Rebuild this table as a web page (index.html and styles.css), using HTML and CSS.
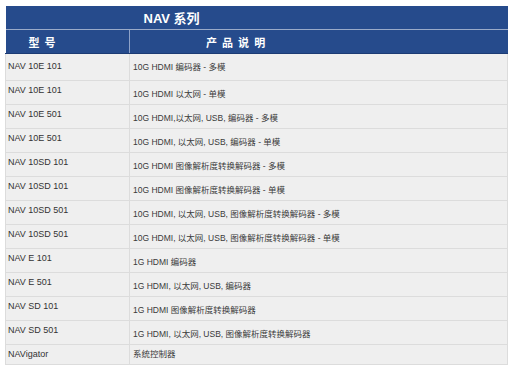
FILE: index.html
```html
<!DOCTYPE html>
<html lang="zh">
<head>
<meta charset="utf-8">
<title>NAV 系列</title>
<link rel="stylesheet" href="styles.css">
</head>
<body>
<table class="spec">
  <colgroup><col class="c1"><col class="c2"></colgroup>
  <thead>
    <tr><th class="title" colspan="2">NAV 系列</th></tr>
    <tr><th class="h1">型 号</th><th class="h2">产 品 说 明</th></tr>
  </thead>
  <tbody>
    <tr class="first"><td class="m">NAV 10E 101</td><td class="d">10G HDMI 编码器 - 多模</td></tr>
    <tr><td class="m">NAV 10E 101</td><td class="d">10G HDMI 以太网 - 单模</td></tr>
    <tr><td class="m">NAV 10E 501</td><td class="d">10G HDMI,以太网, USB, 编码器 - 多模</td></tr>
    <tr><td class="m">NAV 10E 501</td><td class="d">10G HDMI, 以太网, USB, 编码器 - 单模</td></tr>
    <tr><td class="m">NAV 10SD 101</td><td class="d">10G HDMI 图像解析度转换解码器 - 多模</td></tr>
    <tr><td class="m">NAV 10SD 101</td><td class="d">10G HDMI 图像解析度转换解码器 - 单模</td></tr>
    <tr><td class="m">NAV 10SD 501</td><td class="d">10G HDMI, 以太网, USB, 图像解析度转换解码器 - 多模</td></tr>
    <tr><td class="m">NAV 10SD 501</td><td class="d">10G HDMI, 以太网, USB, 图像解析度转换解码器 - 单模</td></tr>
    <tr><td class="m">NAV E 101</td><td class="d">1G HDMI 编码器</td></tr>
    <tr><td class="m">NAV E 501</td><td class="d">1G HDMI, 以太网, USB, 编码器</td></tr>
    <tr><td class="m">NAV SD 101</td><td class="d">1G HDMI 图像解析度转换解码器</td></tr>
    <tr><td class="m">NAV SD 501</td><td class="d">1G HDMI, 以太网, USB, 图像解析度转换解码器</td></tr>
    <tr class="last"><td class="m">NAVigator</td><td class="d">系统控制器</td></tr>
  </tbody>
</table>
</body>
</html>
```
FILE: styles.css
```css
html, body {
  margin: 0;
  padding: 0;
  background: #ffffff;
}

body {
  font-family: "Liberation Sans", "Noto Sans CJK SC", sans-serif;
}

.spec {
  margin: 6px 0 0 5px;
  width: 503px;
  border-collapse: collapse;
  table-layout: fixed;
}

.c1 { width: 124px; }

.spec th {
  background: #264b8c;
  color: #ffffff;
  font-weight: bold;
  text-align: left;
  padding: 0;
}

.title {
  height: 23px;
  font-size: 13px;
  padding-left: 138px !important;
  border-bottom: 1px solid #9aaac8;
}

.h1, .h2 {
  height: 23px;
  font-size: 11px;
  letter-spacing: 1px;
  border-bottom: 1px solid #1c3b74;
}

.h1 {
  padding-left: 23px !important;
  border-right: 1px solid #8ea2c8;
}

.h2 {
  padding-left: 76px !important;
}

.spec td {
  background: #efefef;
  border: 1px solid #dcdcdc;
  line-height: 14px;
  vertical-align: top;
}

.m {
  font-size: 9px;
  color: #333333;
  padding: 2px 2px 7px;
}

.d {
  font-size: 8.5px;
  color: #3a3a3a;
  padding: 6px 3px 3px;
}

.first .m {
  padding-top: 5px;
}

.last .m {
  padding: 2px 2px 3px;
}

.last .d {
  padding: 2px 3px 3px;
}
```
